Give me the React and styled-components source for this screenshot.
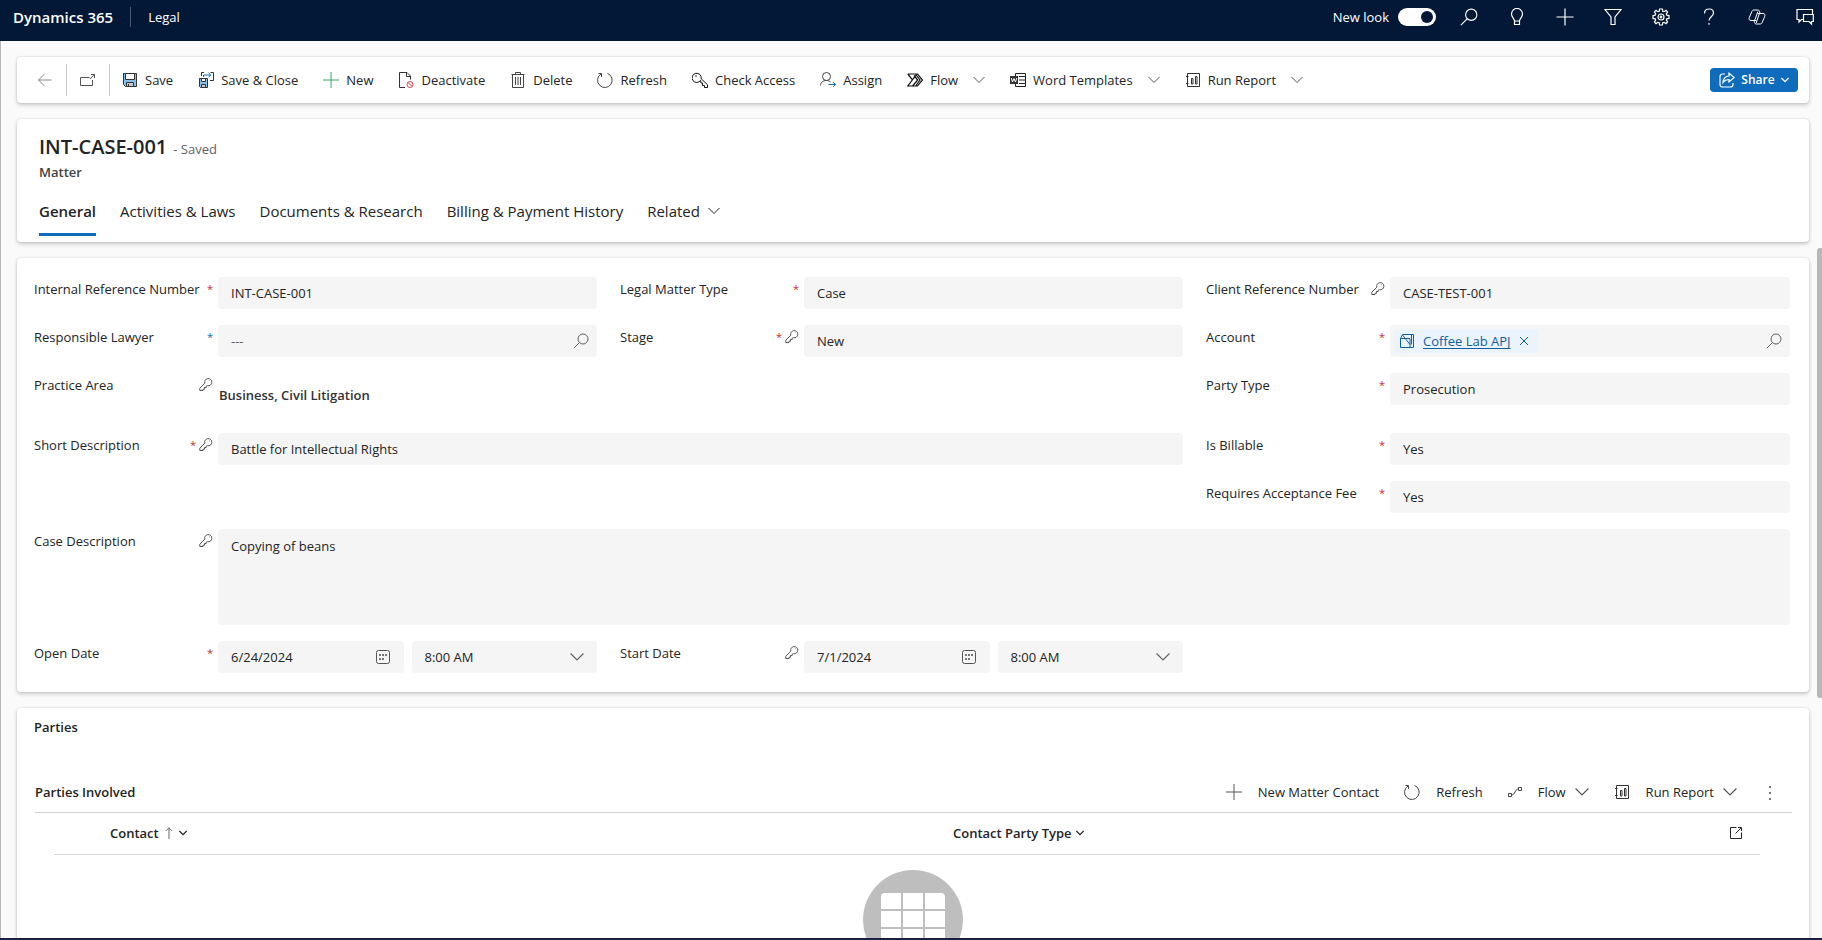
import styled, { createGlobalStyle } from "styled-components";

const GlobalStyle = createGlobalStyle`
   * { box-sizing: border-box; }
   html, body, #root { height: 100%; }
   body {
      margin: 0;
      overflow: hidden;
      background: #fafafa;
      color: #242424;
      font: 13px/20px "Open Sans", "Noto Sans", sans-serif;
   }
   button, input, textarea, select { font: inherit; color: inherit; }
   button { border: none; background: none; padding: 0; cursor: pointer; }
   h1, h2, h3, p { margin: 0; font: inherit; }
   svg { display: block; flex: none; }
`

const Svg = styled.svg`
   width: ${props => props.$size || 16}px;
   height: ${props => props.$size || 16}px;
   fill: none;
   stroke: currentColor;
   stroke-width: ${props => props.$stroke || 1};
`

const Icon = ({ size, stroke, children, box = 16 }) => (
   <Svg $size={size} $stroke={stroke} viewBox={`0 0 ${box} ${box}`} aria-hidden="true">{children}</Svg>
)

const BackIcon = () => <Icon><path d="M1.500 8h13M7.500 2 1.500 8l6 6" stroke="#8a8686" /></Icon>
const PopoutIcon = () => <Icon><path d="M9.500 5.500h-9v8h12V8M10 7l4.500-4.500M11 2.500h3.500V6" stroke="#555" /></Icon>
const SaveIcon = () => (
   <Icon>
      <path d="M1.500 1.500h13v13h-11l-2-2z" fill="#83beec" stroke="#333" />
      <path d="M3.500 1.500h9v6h-9z" fill="#fff" stroke="#333" />
      <path d="M4.500 14.500v-4h7v4z" fill="#c8c8c8" stroke="#333" />
      <path d="M6.500 12v2.500" stroke="#333" />
   </Icon>
)
const SaveCloseIcon = () => (
   <Icon>
      <path d="M1.500 6.500h8v9h-7l-1-1z" fill="#83beec" stroke="#333" />
      <path d="M3.500 6.500h4v3h-4z" fill="#fff" stroke="#333" />
      <path d="M3.500 15.500v-3h4v3z" fill="#c8c8c8" stroke="#333" />
      <path d="M3.500 4V.5H6M12.500.5h3v8H12" stroke="#333" />
      <path d="M5.500 5V3h7M10.500.8 12.800 3l-2.300 2.300" stroke="#0f6cbd" />
   </Icon>
)
const PlusIcon = ({ color }) => <Icon><path d="M8 0v16M0 8h16" stroke={color || "#555"} /></Icon>
const DeactivateIcon = () => (
   <Icon>
      <path d="M7 15.500H1.500V.5H9l3.500 3.500v3.500M8.500.5v4h4" stroke="#333" />
      <circle cx="12" cy="12.500" r="3" stroke="#e0444c" />
      <path d="m10 10.500 4 4" stroke="#e0444c" />
   </Icon>
)
const DeleteIcon = () => <Icon><path d="M1.500 2.500h13M5.500 2.500v-2h5v2M2.500 2.500v13h11v-13M5.500 5v8M8 5v8M10.500 5v8" stroke="#444" /></Icon>
const RefreshIcon = () => <Icon><path d="M10.500 1.400A7.300 7.300 0 1 1 4 2M1.500 1.500h3v3.500" stroke="#444" /></Icon>
const CheckAccessIcon = () => (
   <Icon>
      <path d="M8.600 8.300A4.600 4.600 0 1 1 9.200 6.800l6.300 6V15.500H12.500v-2h-2v-2.500h-1.500z" stroke="#111" />
      <circle cx="4" cy="4" r=".8" fill="#111" stroke="none" />
   </Icon>
)
const AssignIcon = () => (
   <Icon>
      <circle cx="6.500" cy="4.500" r="4" stroke="#444" />
      <path d="M.5 13.500c0-3 2.500-5 6-5 1.500 0 3 .5 4 1.500" stroke="#444" />
      <path d="M8.500 12.500h7M13 10l2.500 2.500L13 15" stroke="#0f6cbd" />
   </Icon>
)
const FlowIcon = () => <Icon stroke={1.200}><path d="M.8 2h9.700L15.500 8l-5 6H.8L9.500 2.500M.8 2l4.700 5.800M5.500 14l5.200-6L7 3.500M8.500 14l4.500-6-3.500-4.500" stroke="#111" /></Icon>
const WordIcon = () => (
   <Icon>
      <path d="M5.500 4V1.500h10v13h-10V12M9 4.500h6M9 8h6M9 11.500h6" stroke="#222" />
      <path d="M0 4h8v8H0z" fill="#333" stroke="none" />
      <path d="m1.300 6 1.200 4L4 6.500 5.500 10l1.200-4" stroke="#fff" />
   </Icon>
)
const ReportIcon = ({ size }) => <Icon size={size}><path d="M2.500 1.500h12v13h-12zM6.500 6.500h1.500v5.500h-1.500zM10.500 4.500h1.500v7.500h-1.500zM1 4.500h2.500M1 11.500h2.500" stroke="#333" /></Icon>
const ChevronIcon = ({ size, stroke }) => <Icon size={size || 12} box={12} stroke={stroke}><path d="m.5 3 5.500 5.500L11.500 3" /></Icon>
const ShareIcon = () => (
   <Icon stroke={1.200}>
      <path d="M6 2H3.500A2.500 2.500 0 0 0 1 4.500v8A2.500 2.500 0 0 0 3.500 15h8a2.500 2.500 0 0 0 2.500-2.500V11" />
      <path d="M10 1.200 15.200 5.500 10 10V7.500C7.500 7.500 5.500 8.500 4 10.500c.3-4 2.500-6.300 6-6.500z" />
   </Icon>
)
const SearchIcon = ({ size, stroke }) => <Icon size={size} stroke={stroke}><circle cx="10" cy="6" r="5" /><path d="M6.500 9.500.8 15.200" /></Icon>
const BulbIcon = () => <Icon size={18} box={18} stroke={1.200}><path d="M6.500 13c0-2.500-3-3.500-3-7a5.500 5.500 0 0 1 11 0c0 3.500-3 4.500-3 7zM6.500 13v3.500h5V13" /></Icon>
const AddIcon = () => <Icon size={18} box={18} stroke={1.200}><path d="M9 .5v17M.5 9h17" /></Icon>
const FilterIcon = () => <Icon size={18} box={18} stroke={1.200}><path d="M1 1.500h16L11 9v7.500H7V9z" /></Icon>
const GearIcon = () => (
   <Icon size={18} box={18} stroke={1.200}>
      <path d="m7.600 1-.4 2.200-1.300.5L4 2.400 2.400 4l1.300 1.900-.5 1.300L1 7.600v2.800l2.200.4.5 1.300L2.400 14 4 15.600l1.900-1.300 1.300.5.400 2.200h2.800l.4-2.200 1.300-.5 1.900 1.300 1.600-1.600-1.300-1.900.5-1.300 2.200-.4V7.600l-2.200-.4-.5-1.300L15.600 4 14 2.400l-1.900 1.300-1.300-.5L10.400 1z" />
      <circle cx="9" cy="9" r="3" /><circle cx="9" cy="9" r=".8" />
   </Icon>
)
const HelpIcon = () => <Icon size={18} box={18} stroke={1.200}><path d="M4.500 5.500c0-2.700 2-4.500 4.700-4.500s4.300 1.700 4.300 4c0 3.500-4.500 4-4.500 7.500M9 15v1.800" /></Icon>
const CopilotIcon = () => (
   <Icon size={18} box={18}>
      <path d="M12 5 11.500 3.300C11.200 2.300 10.600 2 9.800 2H6C4.900 2 4.200 2.500 3.800 3.600L1.300 9.500C.6 11.300 1.300 12.500 3 12.500h2.300c1 0 1.600-.5 1.900-1.400L9.800 3.500M6 12.500l.5 1.900c.3 1 .8 1.600 1.800 1.600H12c1.100 0 1.800-.5 2.200-1.600l2.500-5.900c.7-1.800 0-3-1.700-3h-2.300c-1 0-1.600.5-1.900 1.400L8.200 15M9.500 5.500h3.200M5.300 12.500h3.200" />
   </Icon>
)
const FeedbackIcon = () => <Icon size={18} box={18} stroke={1.200}><path d="M7 11.500H5.500L3 14v-2.500H1v-10h15.500V6M7.500 6.500h9.800v7h-1.800V16L13 13.500H7.500z" /></Icon>
const KeyIcon = () => <Icon size={14} box={14}><path d="M5.800 6.200A3.600 3.600 0 1 1 8.500 8.700L7.200 9.200v1.300H5.500v1.700H4v1.300H.8v-2.300zM10.300 3.700h.4" stroke="#555" /></Icon>
const AccountIcon = () => <Icon><path d="M1.500 14.500v-9l2-4h11v13zM1.500 5.500h9.500v9M3.500 2l7.500 9.500M12.500 2v9.500" /></Icon>
const CloseIcon = () => <Icon size={10} box={10}><path d="m1 1 8 8M9 1 1 9" /></Icon>
const CalendarIcon = () => (
   <Icon>
      <rect x="1.500" y="1.500" width="13" height="13" rx="2" stroke="#555" />
      <path d="M4 6h2M7 6h2M10 6h2M4 10h2M7 10h2" stroke="#777" strokeWidth="2" />
   </Icon>
)
const FlowLineIcon = () => <Icon size={14} box={14}><path d="M.5 8.500h3v3h-3zM10.500 2.500h3v3h-3zM3.500 10c4 0 3-6 7-6" stroke="#444" /></Icon>
const OpenIcon = () => <Icon size={12} box={12}><path d="M6.500.5h-6v11h11v-6M5.500 6.500 11 1M8 .5h3.500V4" /></Icon>
const DotsIcon = () => <Icon><path d="M7 2h2v2H7zM7 8h2v2H7zM7 14h2v2H7z" fill="#777" stroke="none" /></Icon>
const SortUpIcon = () => <Icon size={12} box={12}><path d="M6 12V.8M3 3.800l3-3 3 3" stroke="#666" /></Icon>
const GridIcon = () => (
   <Icon size={100} box={100}>
      <circle cx="50" cy="50" r="50" fill="#bebebe" stroke="none" />
      <rect x="18" y="23" width="64" height="54" rx="4" fill="#fff" stroke="none" />
      <path d="M39 23v54M61 23v54M18 40h64M18 58h64" stroke="#bebebe" strokeWidth="2" />
   </Icon>
)

const Page = styled.div`
   display: flex;
   flex-direction: column;
   height: 100%;
   border-bottom: 2px solid #1a1f45;
`

const TopBar = styled.header`
   display: flex;
   align-items: center;
   flex: none;
   height: 41px;
   padding: 0 8px 7px 13px;
   background: #021836;
   color: #fff;
`

const Brand = styled.span`
   font-size: 15px;
   font-weight: 600;
   padding-right: 17px;
   border-right: 1px solid #4a5a75;
   margin-right: 17px;
`

const AppName = styled.a`
   color: inherit;
   text-decoration: none;
   margin-right: auto;
`

const Toggle = styled.label`
   display: flex;
   align-items: center;
   gap: 9px;
   margin-right: 24px;
   input {
      appearance: none;
      display: flex;
      justify-content: flex-end;
      width: 38px;
      height: 18px;
      margin: 0;
      padding: 3px;
      border-radius: 9px;
      background: #fff;
   }
   input::after {
      content: "";
      width: 12px;
      height: 12px;
      border-radius: 50%;
      background: #021836;
   }
`

const TopActions = styled.nav`
   display: flex;
   gap: 30px;
   button { width: 18px; }
`

const Main = styled.main`
   display: flex;
   flex: 1;
   min-height: 0;
   border-left: 1px solid #b8b8b8;
`

const Content = styled.div`
   display: flex;
   flex-direction: column;
   gap: 16px;
   flex: 1;
   min-width: 0;
   overflow: hidden;
   padding: 16px 8px 0 16px;
`

const ScrollTrack = styled.div`
   flex: none;
   width: 5px;
   padding-top: 207px;
   &::before {
      content: "";
      display: block;
      height: 450px;
      border-radius: 3px 0 0 3px;
      background: #b8b8b8;
   }
`

const Card = styled.section`
   flex: none;
   background: #fff;
   border-radius: 4px;
   box-shadow: 0 0 2px rgba(0, 0, 0, 0.14), 0 2px 4px rgba(0, 0, 0, 0.2);
`

const CommandBar = styled(Card)`
   display: flex;
   align-items: center;
   height: 46px;
   padding: 0 11px 0 20px;
`

const NavButton = styled.button`
   display: flex;
   align-items: center;
   height: 32px;
   padding-right: 13px;
   margin-right: 13px;
   border-right: 1px solid #c8c8c8;
   & + & { margin-right: 12px; }
`

const Command = styled.button`
   display: flex;
   align-items: center;
   gap: 7px;
   margin-right: 25px;
   white-space: nowrap;
   svg:nth-of-type(2) { margin-left: 8px; color: #555; }
`

const ShareButton = styled.button`
   display: flex;
   align-items: center;
   justify-content: center;
   gap: 6px;
   width: 88px;
   height: 24px;
   margin-left: auto;
   border-radius: 4px;
   background: #0f6cbd;
   color: #fff;
   font-size: 12px;
   font-weight: 600;
`

const RecordHead = styled(Card)`
   padding: 16px 22px 6px;
`

const TitleRow = styled.div`
   display: flex;
   align-items: baseline;
   gap: 6px;
   h1 {
      font-size: 20px;
      line-height: 24px;
      font-weight: 600;
   }
   span { color: #616161; }
`

const Entity = styled.p`
   padding-top: 3px;
   color: #424242;
   font-weight: 600;
`

const Tabs = styled.nav`
   display: flex;
   gap: 24px;
   padding-top: 19px;
`

const Tab = styled.button`
   display: flex;
   align-items: center;
   gap: 8px;
   height: 35px;
   padding-bottom: 12px;
   font-size: 15px;
   font-weight: ${props => props.$active ? 600 : 400};
   border-bottom: 3px solid ${props => props.$active ? "#0f6cbd" : "transparent"};
`

const FormCard = styled(Card)`
   display: grid;
   grid-template-columns: repeat(3, 1fr);
   grid-template-rows: 32px 32px 44px 32px 32px 96px 32px;
   row-gap: 16px;
   padding: 19px 17px;
`

const FieldBox = styled.div`
   display: flex;
   align-items: stretch;
   min-width: 0;
   grid-column: ${props => props.$col};
   padding-right: ${props => props.$last ? 2 : 23}px;
`

const FieldLabel = styled.label`
   flex: none;
   display: flex;
   align-items: flex-start;
   gap: 3px;
   width: 184px;
   padding: 2px 5px 0 0;
   white-space: nowrap;
   span { flex: 1; }
   svg { margin-top: 2px; }
`

const Star = styled.em`
   color: ${props => props.$blue ? "#0f6cbd" : "#bc2f32"};
   font-size: 11px;
   font-style: normal;
`

const boxed = `
   flex: 1;
   min-width: 0;
   width: 100%;
   padding: 0 13px;
   border: none;
   border-radius: 4px;
   background: #f5f5f5;
`

const TextInput = styled.input`${boxed}`

const Choice = styled.select`
   ${boxed}
   height: 32px;
   appearance: none;
`

const TextArea = styled.textarea`
   ${boxed}
   padding-top: 7px;
   resize: none;
`

const InputShell = styled.div`
   ${boxed}
   display: flex;
   align-items: center;
   input, select {
      flex: 1;
      min-width: 0;
      padding: 0;
      border: none;
      background: none;
      appearance: none;
   }
   > button, > svg { color: #616161; }
`

const LookupShell = styled(InputShell)`
   padding: 0 8px 0 ${props => props.$tagged ? 4 : 13}px;
   input::placeholder { color: #616161; opacity: 1; }
`

const DateGroup = styled.div`
   display: grid;
   grid-template-columns: 1fr 1fr;
   gap: 8px;
   flex: 1;
   min-width: 0;
`

const Tag = styled.span`
   display: flex;
   align-items: center;
   gap: 8px;
   height: 24px;
   padding: 0 9px 0 5px;
   border-radius: 4px;
   background: #ebf3fc;
   color: #115ea3;
   a {
      color: inherit;
      text-underline-offset: 2px;
      text-decoration-skip-ink: none;
   }
`

const PlainValue = styled.output`
   padding: 12px 0 0 1px;
   font-weight: 600;
   color: #333;
`

const PartiesCard = styled(Card)`
   padding: 9px 17px 40px;
   h2 { font-weight: 600; }
`

const GridHead = styled.div`
   display: flex;
   align-items: center;
   height: 42px;
   margin-top: 34px;
   margin-left: 1px;
   border-bottom: 1px solid #d1d1d1;
   h3 { font-weight: 600; margin-right: auto; }
`

const GridCommand = styled(Command)`
   gap: 16px;
   svg:nth-of-type(2) { margin-left: -7px; }
`

const MoreButton = styled.button`
   margin-right: 14px;
`

const PartyTable = styled.table`
   width: calc(100% - 52px);
   margin-left: 20px;
   border-collapse: collapse;
   th {
      height: 41px;
      padding: 0;
      text-align: left;
      font-weight: 600;
      border-bottom: 1px solid #d9d9d9;
   }
   th:first-child { width: 56px; }
   th:nth-child(2) { width: 843px; }
   th:last-child { width: 30px; }
   th button { display: flex; align-items: center; gap: 4px; font-weight: 600; }
`

const Empty = styled.div`
   display: flex;
   justify-content: center;
   padding-top: 15px;
`

function Field({ id, label, required, locked, blue, col, last, children }) {
   return (
      <FieldBox $col={col} $last={last}>
         <FieldLabel htmlFor={id}>
            <span>{label}</span>
            {required && <Star $blue={blue}>*</Star>}
            {locked && <KeyIcon />}
         </FieldLabel>
         {children}
      </FieldBox>
   )
}

function DateTime({ id, label, date, time }) {
   return (
      <DateGroup>
         <InputShell>
            <input id={id} defaultValue={date} />
            <button type="button" aria-label={`Pick ${label}`}><CalendarIcon /></button>
         </InputShell>
         <InputShell>
            <select aria-label={`${label} time`}><option>{time}</option></select>
            <ChevronIcon size={14} />
         </InputShell>
      </DateGroup>
   )
}

const COMMANDS = [
   { text: "Save", icon: <SaveIcon /> },
   { text: "Save & Close", icon: <SaveCloseIcon /> },
   { text: "New", icon: <PlusIcon color="#3aa76d" /> },
   { text: "Deactivate", icon: <DeactivateIcon /> },
   { text: "Delete", icon: <DeleteIcon /> },
   { text: "Refresh", icon: <RefreshIcon /> },
   { text: "Check Access", icon: <CheckAccessIcon /> },
   { text: "Assign", icon: <AssignIcon /> },
   { text: "Flow", icon: <FlowIcon />, menu: true },
   { text: "Word Templates", icon: <WordIcon />, menu: true },
   { text: "Run Report", icon: <ReportIcon />, menu: true }
]

const GRID_COMMANDS = [
   { text: "New Matter Contact", icon: <PlusIcon /> },
   { text: "Refresh", icon: <RefreshIcon /> },
   { text: "Flow", icon: <FlowLineIcon />, menu: true },
   { text: "Run Report", icon: <ReportIcon size={16} />, menu: true }
]

const TOP_ACTIONS = [
   { text: "Search", icon: <SearchIcon size={18} /> },
   { text: "Tips", icon: <BulbIcon /> },
   { text: "Add", icon: <AddIcon /> },
   { text: "Filter", icon: <FilterIcon /> },
   { text: "Settings", icon: <GearIcon /> },
   { text: "Help", icon: <HelpIcon /> },
   { text: "Copilot", icon: <CopilotIcon /> },
   { text: "Feedback", icon: <FeedbackIcon /> }
]

const TABS = ["General", "Activities & Laws", "Documents & Research", "Billing & Payment History"]

export default function App() {
   return (
      <Page>
         <GlobalStyle />
         <TopBar>
            <Brand>Dynamics 365</Brand>
            <AppName href="#legal">Legal</AppName>
            <Toggle>New look<input type="checkbox" role="switch" defaultChecked /></Toggle>
            <TopActions>
               {TOP_ACTIONS.map(a => <button key={a.text} aria-label={a.text}>{a.icon}</button>)}
            </TopActions>
         </TopBar>
         <Main>
            <Content>
               <CommandBar>
                  <NavButton aria-label="Back"><BackIcon /></NavButton>
                  <NavButton aria-label="Open in new window"><PopoutIcon /></NavButton>
                  {COMMANDS.map(c => (
                     <Command key={c.text}>{c.icon}{c.text}{c.menu && <ChevronIcon />}</Command>
                  ))}
                  <ShareButton><ShareIcon />Share<ChevronIcon size={8} stroke={2} /></ShareButton>
               </CommandBar>

               <RecordHead>
                  <TitleRow><h1>INT-CASE-001</h1><span>- Saved</span></TitleRow>
                  <Entity>Matter</Entity>
                  <Tabs>
                     {TABS.map((t, i) => <Tab key={t} $active={i === 0}>{t}</Tab>)}
                     <Tab>Related<ChevronIcon /></Tab>
                  </Tabs>
               </RecordHead>

               <FormCard as="form">
                  <Field id="ref" label="Internal Reference Number" required col="1">
                     <TextInput id="ref" defaultValue="INT-CASE-001" />
                  </Field>
                  <Field id="type" label="Legal Matter Type" required col="2">
                     <Choice id="type"><option>Case</option></Choice>
                  </Field>
                  <Field id="client" label="Client Reference Number" locked col="3" last>
                     <TextInput id="client" defaultValue="CASE-TEST-001" readOnly />
                  </Field>

                  <Field id="lawyer" label="Responsible Lawyer" required blue col="1">
                     <LookupShell>
                        <input id="lawyer" placeholder="---" />
                        <button type="button" aria-label="Search lawyers"><SearchIcon /></button>
                     </LookupShell>
                  </Field>
                  <Field id="stage" label="Stage" required locked col="2">
                     <Choice id="stage"><option>New</option></Choice>
                  </Field>
                  <Field id="account" label="Account" required col="3" last>
                     <LookupShell $tagged>
                        <Tag>
                           <AccountIcon />
                           <a href="#account">Coffee Lab APJ</a>
                           <button type="button" aria-label="Remove account"><CloseIcon /></button>
                        </Tag>
                        <input id="account" />
                        <button type="button" aria-label="Search accounts"><SearchIcon /></button>
                     </LookupShell>
                  </Field>

                  <Field id="area" label="Practice Area" locked col="1">
                     <PlainValue id="area">Business, Civil Litigation</PlainValue>
                  </Field>
                  <Field id="party" label="Party Type" required col="3" last>
                     <Choice id="party"><option>Prosecution</option></Choice>
                  </Field>

                  <Field id="short" label="Short Description" required locked col="1 / span 2">
                     <TextInput id="short" defaultValue="Battle for Intellectual Rights" readOnly />
                  </Field>
                  <Field id="billable" label="Is Billable" required col="3" last>
                     <Choice id="billable"><option>Yes</option></Choice>
                  </Field>

                  <Field id="fee" label="Requires Acceptance Fee" required col="3" last>
                     <Choice id="fee"><option>Yes</option></Choice>
                  </Field>

                  <Field id="desc" label="Case Description" locked col="1 / span 3" last>
                     <TextArea id="desc" defaultValue="Copying of beans" readOnly />
                  </Field>

                  <Field id="open" label="Open Date" required col="1">
                     <DateTime id="open" label="Open Date" date="6/24/2024" time="8:00 AM" />
                  </Field>
                  <Field id="start" label="Start Date" locked col="2">
                     <DateTime id="start" label="Start Date" date="7/1/2024" time="8:00 AM" />
                  </Field>
               </FormCard>

               <PartiesCard>
                  <h2>Parties</h2>
                  <GridHead>
                     <h3>Parties Involved</h3>
                     {GRID_COMMANDS.map(c => (
                        <GridCommand key={c.text}>{c.icon}{c.text}{c.menu && <ChevronIcon size={14} />}</GridCommand>
                     ))}
                     <MoreButton aria-label="More commands"><DotsIcon /></MoreButton>
                  </GridHead>
                  <PartyTable>
                     <thead>
                        <tr>
                           <th aria-label="Select" />
                           <th><button>Contact <SortUpIcon /><ChevronIcon size={8} stroke={2} /></button></th>
                           <th><button>Contact Party Type <ChevronIcon size={8} stroke={2} /></button></th>
                           <th><button aria-label="Open grid"><OpenIcon /></button></th>
                        </tr>
                     </thead>
                  </PartyTable>
                  <Empty><GridIcon /></Empty>
               </PartiesCard>
            </Content>
            <ScrollTrack />
         </Main>
      </Page>
   )
}
